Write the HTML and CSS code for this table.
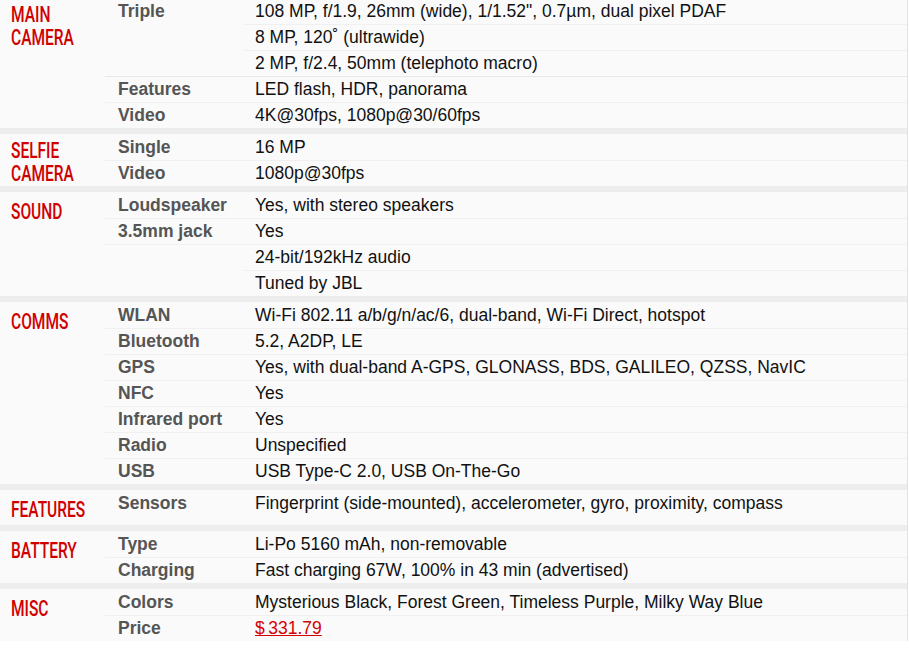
FILE: index.html
```html
<!DOCTYPE html>
<html lang="en">
<head>
<meta charset="utf-8">
<title>Specs</title>
<link rel="stylesheet" href="styles.css">
</head>
<body>
<div class="specs">
  <section class="grp">
    <h2 class="cat two"><span class="ln">Main</span><span class="ln">Camera</span></h2>
    <div class="rows">
      <div class="row"><div class="ttl">Triple</div><div class="nfo">108 MP, f/1.9, 26mm (wide), 1/1.52", 0.7µm, dual pixel PDAF</div></div>
      <div class="row sub"><div class="ttl"></div><div class="nfo">8 MP, 120˚ (ultrawide)</div></div>
      <div class="row sub"><div class="ttl"></div><div class="nfo">2 MP, f/2.4, 50mm (telephoto macro)</div></div>
      <div class="row strong"><div class="ttl">Features</div><div class="nfo">LED flash, HDR, panorama</div></div>
      <div class="row"><div class="ttl">Video</div><div class="nfo">4K@30fps, 1080p@30/60fps</div></div>
    </div>
  </section>
  <section class="grp">
    <h2 class="cat two"><span class="ln">Selfie</span><span class="ln">camera</span></h2>
    <div class="rows">
      <div class="row"><div class="ttl">Single</div><div class="nfo">16 MP</div></div>
      <div class="row"><div class="ttl">Video</div><div class="nfo">1080p@30fps</div></div>
    </div>
  </section>
  <section class="grp">
    <h2 class="cat"><span class="ln">Sound</span></h2>
    <div class="rows">
      <div class="row"><div class="ttl">Loudspeaker</div><div class="nfo">Yes, with stereo speakers</div></div>
      <div class="row"><div class="ttl">3.5mm jack</div><div class="nfo">Yes</div></div>
      <div class="row"><div class="ttl"></div><div class="nfo">24-bit/192kHz audio</div></div>
      <div class="row sub"><div class="ttl"></div><div class="nfo">Tuned by JBL</div></div>
    </div>
  </section>
  <section class="grp">
    <h2 class="cat"><span class="ln">Comms</span></h2>
    <div class="rows">
      <div class="row"><div class="ttl">WLAN</div><div class="nfo">Wi-Fi 802.11 a/b/g/n/ac/6, dual-band, Wi-Fi Direct, hotspot</div></div>
      <div class="row"><div class="ttl">Bluetooth</div><div class="nfo">5.2, A2DP, LE</div></div>
      <div class="row"><div class="ttl">GPS</div><div class="nfo">Yes, with dual-band A-GPS, GLONASS, BDS, GALILEO, QZSS, NavIC</div></div>
      <div class="row"><div class="ttl">NFC</div><div class="nfo">Yes</div></div>
      <div class="row"><div class="ttl">Infrared port</div><div class="nfo">Yes</div></div>
      <div class="row"><div class="ttl">Radio</div><div class="nfo">Unspecified</div></div>
      <div class="row"><div class="ttl">USB</div><div class="nfo">USB Type-C 2.0, USB On-The-Go</div></div>
    </div>
  </section>
  <section class="grp">
    <h2 class="cat"><span class="ln">Features</span></h2>
    <div class="rows">
      <div class="row"><div class="ttl">Sensors</div><div class="nfo">Fingerprint (side-mounted), accelerometer, gyro, proximity, compass</div></div>
    </div>
  </section>
  <section class="grp">
    <h2 class="cat"><span class="ln">Battery</span></h2>
    <div class="rows">
      <div class="row"><div class="ttl">Type</div><div class="nfo">Li-Po 5160 mAh, non-removable</div></div>
      <div class="row"><div class="ttl">Charging</div><div class="nfo">Fast charging 67W, 100% in 43 min (advertised)</div></div>
    </div>
  </section>
  <section class="grp">
    <h2 class="cat"><span class="ln">Misc</span></h2>
    <div class="rows">
      <div class="row"><div class="ttl">Colors</div><div class="nfo">Mysterious Black, Forest Green, Timeless Purple, Milky Way Blue</div></div>
      <div class="row"><div class="ttl">Price</div><div class="nfo"><a class="price" href="#">$&thinsp;331.79</a></div></div>
    </div>
  </section>
</div>
</body>
</html>
```
FILE: styles.css
```css
html, body {
  margin: 0;
  padding: 0;
  background: #ffffff;
}

body {
  font-family: "Liberation Sans", Arial, sans-serif;
}

.specs {
  width: 907px;
  margin-top: -2px;
  border-right: 1px solid #e2e2e2;
  background: #ededed;
  display: flex;
  flex-direction: column;
  gap: 6px;
}

.grp {
  display: grid;
  grid-template-columns: 105px 1fr;
  align-items: start;
  background: #fafafa;
}

.cat {
  margin: 0;
  padding: 7.5px 0 4.5px 11px;
  font-family: Roboto, "Liberation Sans", sans-serif;
  font-size: 22.5px;
  line-height: 23px;
  font-weight: 500;
  color: #d00000;
  text-transform: uppercase;
  white-space: nowrap;
  display: flex;
  flex-direction: column;
  align-items: flex-start;
}

.cat.two {
  padding-top: 5px;
  padding-bottom: 0;
}

.cat .ln {
  display: block;
  height: 23px;
  transform: scaleX(0.69);
  transform-origin: left center;
}

.rows {
  display: flex;
  flex-direction: column;
}

.row {
  display: grid;
  grid-template-columns: 139px 1fr;
  height: 26px;
}

.ttl, .nfo {
  border-top: 1px solid #f0f0f0;
  line-height: 25px;
  font-size: 17.5px;
  white-space: nowrap;
}

.row:first-child .ttl,
.row:first-child .nfo {
  border-top-color: transparent;
}

.row.sub .ttl {
  border-top-color: transparent;
}

.row.strong .ttl,
.row.strong .nfo {
  border-top-color: #e8e8e8;
}

.ttl {
  padding-left: 13px;
  font-weight: 700;
  color: #555555;
}

.nfo {
  padding-left: 11px;
  color: #111111;
}

.price {
  color: #d50000;
  text-decoration: underline;
}
```
